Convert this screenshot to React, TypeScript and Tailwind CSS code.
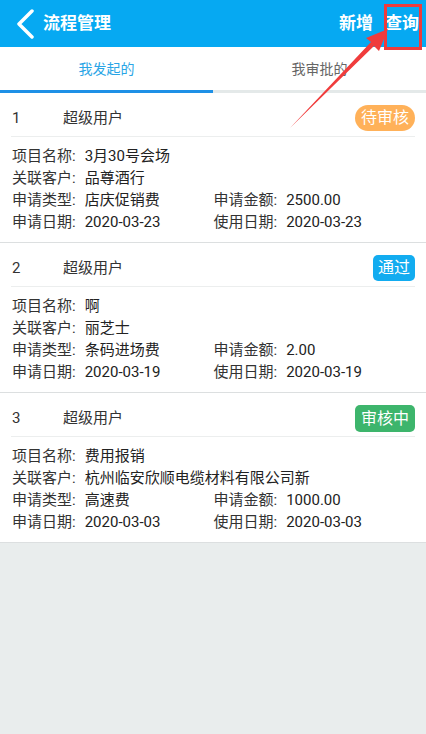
import React from 'react';

type Status = 'pending' | 'passed' | 'reviewing';

interface FlowItem {
  no: number;
  user: string;
  project: string;
  customer: string;
  type: string;
  amount: string;
  applyDate: string;
  useDate: string;
  status: Status;
}

const items: FlowItem[] = [
  { no: 1, user: '超级用户', project: '3月30号会场', customer: '品尊酒行', type: '店庆促销费', amount: '2500.00', applyDate: '2020-03-23', useDate: '2020-03-23', status: 'pending' },
  { no: 2, user: '超级用户', project: '啊', customer: '丽芝士', type: '条码进场费', amount: '2.00', applyDate: '2020-03-19', useDate: '2020-03-19', status: 'passed' },
  { no: 3, user: '超级用户', project: '费用报销', customer: '杭州临安欣顺电缆材料有限公司新', type: '高速费', amount: '1000.00', applyDate: '2020-03-03', useDate: '2020-03-03', status: 'reviewing' },
];

const StatusBadge = ({ status }: { status: Status }) => {
  if (status === 'pending') {
    return <span className="h-[26px] px-[6px] rounded-full bg-[#ffb159] text-white text-[16px] leading-[26px]">待审核</span>;
  }
  if (status === 'passed') {
    return <span className="h-[26px] px-[5px] rounded-[5px] bg-[#12acf0] text-white text-[16px] leading-[26px]">通过</span>;
  }
  return <span className="h-[27px] px-[6px] rounded-[5px] bg-[#3db56c] text-white text-[16px] leading-[27px]">审核中</span>;
};

const Field = ({ label, value }: { label: string; value: string }) => (
  <div className="whitespace-nowrap">
    <span className="text-[#333]">{label}:</span>
    <span className="ml-[9px]">{value}</span>
  </div>
);

const FlowCard = ({ item }: { item: FlowItem }) => (
  <div className="h-[150px] bg-white border-b border-[#dcdfe0] px-[11px]">
    {/* Card header */}
    <div className="h-[44px] pt-[12px] border-b border-[#eceeee] flex items-start">
      <div className="h-[26px] flex items-center flex-1 text-[15px] text-[#333]">
        <span className="w-[52px] pl-[1px]">{item.no}</span>
        <span>{item.user}</span>
      </div>
      <StatusBadge status={item.status} />
    </div>

    {/* Card body */}
    <div className="pt-[8px] pl-[1px] text-[15px] leading-[22px] text-[#222]">
      <Field label="项目名称" value={item.project} />
      <Field label="关联客户" value={item.customer} />
      <div className="grid grid-cols-2">
        <Field label="申请类型" value={item.type} />
        <Field label="申请金额" value={item.amount} />
      </div>
      <div className="grid grid-cols-2">
        <Field label="申请日期" value={item.applyDate} />
        <Field label="使用日期" value={item.useDate} />
      </div>
    </div>
  </div>
);

export default function App() {
  return (
    <div
      className="relative w-[426px] h-[734px] bg-[#e9eded] overflow-hidden"
      style={{ fontFamily: "Roboto, 'Noto Sans CJK SC', sans-serif" }}
    >
      {/* Top bar */}
      <div className="h-[47px] bg-[#06a9f2] flex items-center text-white">
        <svg width="20" height="30" viewBox="0 0 20 30" className="ml-[15px]">
          <path d="M17 2 L4 15 L17 28" fill="none" stroke="white" strokeWidth="3.5" strokeLinecap="round" strokeLinejoin="round" />
        </svg>
        <span className="ml-[8px] text-[17px] font-bold">流程管理</span>
        <div className="ml-auto mr-[7px] flex gap-[12px] text-[17px] font-bold">
          <span>新增</span>
          <span>查询</span>
        </div>
      </div>

      {/* Tabs */}
      <div className="bg-white">
        <div className="h-[43px] pt-[2px] flex text-[14px]">
          <div className="flex-1 flex items-center justify-center text-[#2aa5e6]">我发起的</div>
          <div className="flex-1 flex items-center justify-center text-[#666]">我审批的</div>
        </div>
        <div className="h-[3px] flex">
          <div className="w-1/2 bg-[#1e90e6]" />
          <div className="w-1/2 bg-[#e4e9e9]" />
        </div>
      </div>

      {/* List */}
      <div>
        {items.map((item) => (
          <FlowCard key={item.no} item={item} />
        ))}
      </div>

      {/* Annotation overlay */}
      <div className="absolute left-[384px] top-[4px] w-[38px] h-[46px] border-[3px] border-[#ee3b3b]" />
      <svg className="absolute left-0 top-0 pointer-events-none" width="426" height="734">
        <polygon
          points="290,128 371,42 366,38 388,29 379,51 374,46"
          fill="#f03c3c"
        />
      </svg>
    </div>
  );
}
